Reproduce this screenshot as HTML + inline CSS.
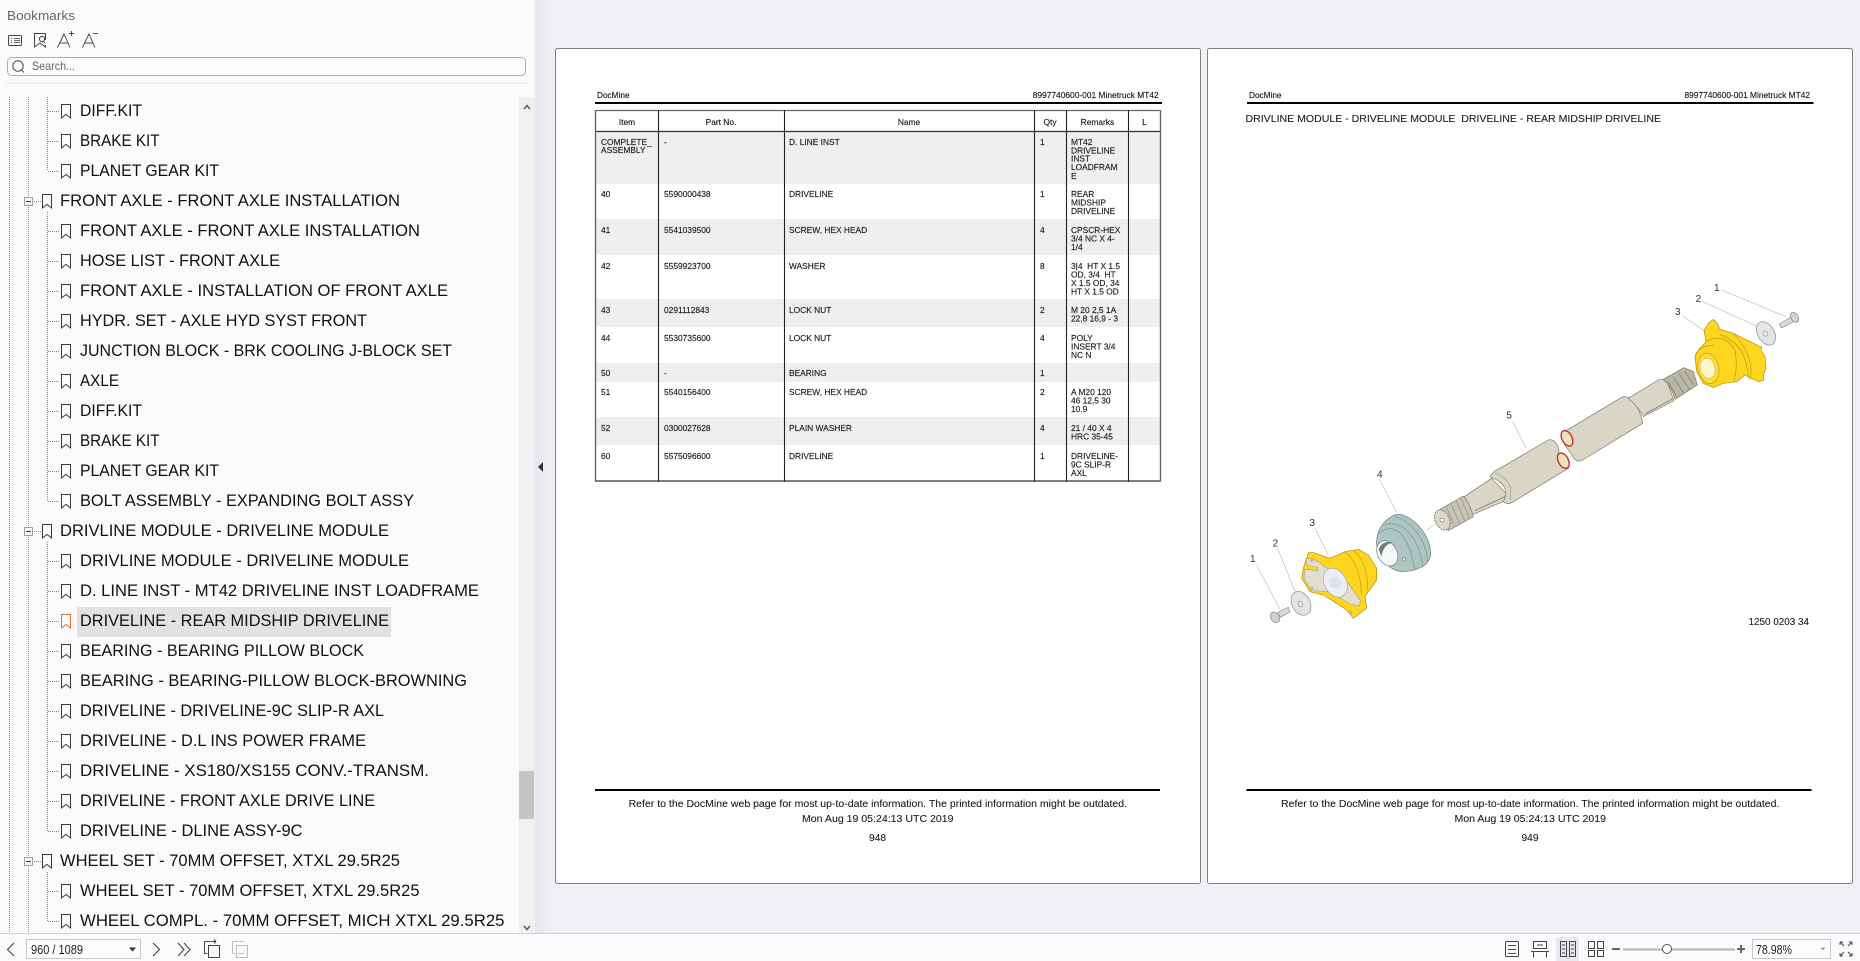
<!DOCTYPE html>
<html><head><meta charset="utf-8"><title>Bookmarks</title>
<style>
html,body{margin:0;padding:0;width:1860px;height:961px;overflow:hidden;background:#eff1f5}
svg{display:block}
text{font-family:"Liberation Sans",Arial,sans-serif}
.t text{font-size:17px;fill:#111}
.p text{font-size:8.4px;fill:#1a1a1a;stroke:#1a1a1a;stroke-width:.14}
.f{font-size:9.9px;fill:#1a1a1a;stroke:#1a1a1a;stroke-width:.08}
.n text{font-size:30px;fill:#333}
.ic{fill:none;stroke:#444;stroke-width:1}
</style></head><body>
<svg width="1860" height="961" viewBox="0 0 1860 961" xmlns="http://www.w3.org/2000/svg">
<defs>
<path id="b" d="M.5.5h9v13.5l-4.5-3.6-4.5 3.6z" fill="none" stroke="#3a3a3a" stroke-width="1"/>
<linearGradient id="bg" x1="0" x2="1"><stop offset="0" stop-color="#e6e8f2"/><stop offset="1" stop-color="#eef0f4"/></linearGradient>
</defs>
<!-- backgrounds -->
<rect width="1860" height="961" fill="#eff1f5"/>
<rect x="535" y="0" width="20" height="933" fill="url(#bg)"/>
<rect x="0" y="0" width="534" height="933" fill="#fbfbfe"/>
<rect x="519" y="97" width="15" height="836" fill="#f0f0f2"/>
<rect x="519" y="771" width="15" height="48" fill="#c4c4c4"/>
<path d="M524 109l3-3.5 3 3.5" fill="none" stroke="#555" stroke-width="1.4"/>
<path d="M524 926l3 3.5 3-3.5" fill="none" stroke="#555" stroke-width="1.4"/>
<path d="M543 462l-5 5 5 5z" fill="#333"/>

<!-- sidebar header -->
<text x="7" y="20" font-size="13" fill="#666" textLength="68" lengthAdjust="spacingAndGlyphs">Bookmarks</text>
<g class="ic">
<rect x="8.5" y="35.5" width="13" height="10" rx="1"/>
<path d="M11 38.5h1M14 38.5h6M11 40.5h1M14 40.5h6M11 42.5h1M14 42.5h6" stroke="#666"/>
<path d="M45.5 40V33.5H34.5V47l5.5-4 5.5 4V45"/>
<circle cx="42" cy="39" r="2.6"/><path d="M43.5 41.5l1.5 2"/>
<path d="M57.5 47.5L64 34l6 13.5M60 43h8" stroke-width=".9"/><path d="M69 33.5h5M71.5 31v5" stroke-width=".9"/>
<path d="M82.5 47.5L89 34l6 13.5M85 43h8" stroke-width=".9"/><path d="M93 33.5h5" stroke-width=".9"/>
</g>
<rect x="7.5" y="57.5" width="518" height="18" rx="4" fill="#fcfcfe" stroke="#aeaeb6"/>
<circle cx="18" cy="66" r="5.2" fill="none" stroke="#444"/><path d="M21.5 70l2.5 2.5" stroke="#444"/>
<text x="32" y="70" font-size="12" fill="#666" textLength="43" lengthAdjust="spacingAndGlyphs">Search...</text>
<path d="M6 83h522" stroke="#e4e4e6"/>

<!-- tree lines -->
<g fill="none" stroke="#8a8a8a" stroke-dasharray="1 1">
<path d="M9.5 97V933M28.5 97V933"/>
<path d="M47.5 97V171M47.5 212V501M47.5 542V831M47.5 872V921"/>
<path d="M48 111.5h12M48 141.5h12M48 171.5h12"/>
<path d="M48 231.5h12M48 261.5h12M48 291.5h12M48 321.5h12M48 351.5h12M48 381.5h12M48 411.5h12M48 441.5h12M48 471.5h12M48 501.5h12"/>
<path d="M48 561.5h12M48 591.5h12M48 621.5h12M48 651.5h12M48 681.5h12M48 711.5h12M48 741.5h12M48 771.5h12M48 801.5h12M48 831.5h12"/>
<path d="M48 891.5h12M48 921.5h12"/>
<path d="M32 201.5h9M32 531.5h9M32 861.5h9"/>
</g>
<g fill="#f4f4f6" stroke="#a0a0a0">
<rect x="24.5" y="197.5" width="8" height="8"/><rect x="24.5" y="527.5" width="8" height="8"/><rect x="24.5" y="857.5" width="8" height="8"/>
</g>
<path d="M26 201.5h5M26 531.5h5M26 861.5h5" stroke="#444"/>

<rect x="77" y="607" width="314" height="30" fill="#e2e2e2"/>

<!-- bookmark icons -->
<g>
<use href="#b" x="61" y="104"/><use href="#b" x="61" y="134"/><use href="#b" x="61" y="164"/>
<use href="#b" x="42" y="194"/>
<use href="#b" x="61" y="224"/><use href="#b" x="61" y="254"/><use href="#b" x="61" y="284"/><use href="#b" x="61" y="314"/><use href="#b" x="61" y="344"/><use href="#b" x="61" y="374"/><use href="#b" x="61" y="404"/><use href="#b" x="61" y="434"/><use href="#b" x="61" y="464"/><use href="#b" x="61" y="494"/>
<use href="#b" x="42" y="524"/>
<use href="#b" x="61" y="554"/><use href="#b" x="61" y="584"/>
<path d="M61.5 614.5h9V628l-4.5-3.6-4.5 3.6z" fill="none" stroke="#d9752b"/>
<use href="#b" x="61" y="644"/><use href="#b" x="61" y="674"/><use href="#b" x="61" y="704"/><use href="#b" x="61" y="734"/><use href="#b" x="61" y="764"/><use href="#b" x="61" y="794"/><use href="#b" x="61" y="824"/>
<use href="#b" x="42" y="854"/>
<use href="#b" x="61" y="884"/><use href="#b" x="61" y="914"/>
</g>

<!-- tree text -->
<g class="t" transform="translate(0 -.8)">
<text x="80" y="117" textLength="62" lengthAdjust="spacingAndGlyphs">DIFF.KIT</text>
<text x="80" y="147" textLength="79.5" lengthAdjust="spacingAndGlyphs">BRAKE KIT</text>
<text x="80" y="177" textLength="139" lengthAdjust="spacingAndGlyphs">PLANET GEAR KIT</text>
<text x="60" y="207" textLength="340" lengthAdjust="spacingAndGlyphs">FRONT AXLE - FRONT AXLE INSTALLATION</text>
<text x="80" y="237" textLength="340" lengthAdjust="spacingAndGlyphs">FRONT AXLE - FRONT AXLE INSTALLATION</text>
<text x="80" y="267" textLength="200" lengthAdjust="spacingAndGlyphs">HOSE LIST - FRONT AXLE</text>
<text x="80" y="297" textLength="368" lengthAdjust="spacingAndGlyphs">FRONT AXLE - INSTALLATION OF FRONT AXLE</text>
<text x="80" y="327" textLength="287" lengthAdjust="spacingAndGlyphs">HYDR. SET - AXLE HYD SYST FRONT</text>
<text x="80" y="357" textLength="372" lengthAdjust="spacingAndGlyphs">JUNCTION BLOCK - BRK COOLING J-BLOCK SET</text>
<text x="80" y="387" textLength="39" lengthAdjust="spacingAndGlyphs">AXLE</text>
<text x="80" y="417" textLength="62" lengthAdjust="spacingAndGlyphs">DIFF.KIT</text>
<text x="80" y="447" textLength="79.5" lengthAdjust="spacingAndGlyphs">BRAKE KIT</text>
<text x="80" y="477" textLength="139" lengthAdjust="spacingAndGlyphs">PLANET GEAR KIT</text>
<text x="80" y="507" textLength="334" lengthAdjust="spacingAndGlyphs">BOLT ASSEMBLY - EXPANDING BOLT ASSY</text>
<text x="60" y="537" textLength="329" lengthAdjust="spacingAndGlyphs">DRIVLINE MODULE - DRIVELINE MODULE</text>
<text x="80" y="567" textLength="329" lengthAdjust="spacingAndGlyphs">DRIVLINE MODULE - DRIVELINE MODULE</text>
<text x="80" y="597" textLength="399" lengthAdjust="spacingAndGlyphs">D. LINE INST - MT42 DRIVELINE INST LOADFRAME</text>
<text x="80" y="627" textLength="309" lengthAdjust="spacingAndGlyphs">DRIVELINE - REAR MIDSHIP DRIVELINE</text>
<text x="80" y="657" textLength="284" lengthAdjust="spacingAndGlyphs">BEARING - BEARING PILLOW BLOCK</text>
<text x="80" y="687" textLength="387" lengthAdjust="spacingAndGlyphs">BEARING - BEARING-PILLOW BLOCK-BROWNING</text>
<text x="80" y="717" textLength="304" lengthAdjust="spacingAndGlyphs">DRIVELINE - DRIVELINE-9C SLIP-R AXL</text>
<text x="80" y="747" textLength="286" lengthAdjust="spacingAndGlyphs">DRIVELINE - D.L INS POWER FRAME</text>
<text x="80" y="777" textLength="349" lengthAdjust="spacingAndGlyphs">DRIVELINE - XS180/XS155 CONV.-TRANSM.</text>
<text x="80" y="807" textLength="295" lengthAdjust="spacingAndGlyphs">DRIVELINE - FRONT AXLE DRIVE LINE</text>
<text x="80" y="837" textLength="222.5" lengthAdjust="spacingAndGlyphs">DRIVELINE - DLINE ASSY-9C</text>
<text x="60" y="867" textLength="340" lengthAdjust="spacingAndGlyphs">WHEEL SET - 70MM OFFSET, XTXL 29.5R25</text>
<text x="80" y="897" textLength="339.5" lengthAdjust="spacingAndGlyphs">WHEEL SET - 70MM OFFSET, XTXL 29.5R25</text>
<text x="80" y="927" textLength="424.5" lengthAdjust="spacingAndGlyphs">WHEEL COMPL. - 70MM OFFSET, MICH XTXL 29.5R25</text>
</g>

<!-- page 1 -->
<rect x="555.5" y="48.5" width="645" height="835" rx="2" fill="#fff" stroke="#808080"/>
<g class="p">
<text x="597" y="98" textLength="32.5" lengthAdjust="spacingAndGlyphs">DocMine</text>
<text x="1032.7" y="98" textLength="126" lengthAdjust="spacingAndGlyphs">8997740600-001 Minetruck MT42</text>
</g>
<rect x="595" y="102" width="567" height="2" fill="#000"/>
<g fill="#efefef">
<rect x="595" y="132" width="566" height="52"/><rect x="595" y="219" width="566" height="36"/><rect x="595" y="299" width="566" height="28"/><rect x="595" y="363" width="566" height="19"/><rect x="595" y="417" width="566" height="28"/>
</g>
<g fill="none">
<path d="M595.5 110.5h565" stroke="#666" stroke-width="1.2"/>
<path d="M595 131.5h566M595 481h566" stroke="#333" stroke-width="1.2"/>
<path d="M595.5 110v371M1160.5 110v371" stroke="#666" stroke-width="1.4"/>
<path d="M658.5 110v372M784.5 110v372M1034.5 110v372M1066.5 110v372M1128.5 110v372" stroke="#222" stroke-width="1.1"/>
</g>
<g class="p">
<g text-anchor="middle">
<text x="627" y="125">Item</text><text x="721" y="125">Part No.</text><text x="909" y="125">Name</text><text x="1050" y="125">Qty</text><text x="1097.4" y="125">Remarks</text><text x="1144.5" y="125">L</text>
</g>
<text x="601" y="145">COMPLETE_</text><text x="601" y="153">ASSEMBLY</text>
<text x="664" y="145">-</text><text x="789" y="145">D. LINE INST</text><text x="1040" y="145">1</text>
<text x="1071" y="145">MT42</text><text x="1071" y="153.3">DRIVELINE</text><text x="1071" y="161.7">INST</text><text x="1071" y="170">LOADFRAM</text><text x="1071" y="179">E</text>

<text x="601" y="197">40</text><text x="664" y="197">5590000438</text><text x="789" y="197">DRIVELINE</text><text x="1040" y="197">1</text>
<text x="1071" y="197">REAR</text><text x="1071" y="205.5">MIDSHIP</text><text x="1071" y="214">DRIVELINE</text>

<text x="601" y="233">41</text><text x="664" y="233">5541039500</text><text x="789" y="233">SCREW, HEX HEAD</text><text x="1040" y="233">4</text>
<text x="1071" y="233">CPSCR-HEX</text><text x="1071" y="241.5">3/4 NC X 4-</text><text x="1071" y="250">1/4</text>

<text x="601" y="269">42</text><text x="664" y="269">5559923700</text><text x="789" y="269">WASHER</text><text x="1040" y="269">8</text>
<text x="1071" y="269" xml:space="preserve" style="white-space:pre">3|4  HT X 1.5</text><text x="1071" y="277.5" xml:space="preserve" style="white-space:pre">OD, 3/4  HT</text><text x="1071" y="286">X 1.5 OD, 34</text><text x="1071" y="294.5">HT X 1.5 OD</text>

<text x="601" y="313">43</text><text x="664" y="313">0291112843</text><text x="789" y="313">LOCK NUT</text><text x="1040" y="313">2</text>
<text x="1071" y="313">M 20 2,5 1A</text><text x="1071" y="321.5">22,8 16,9 - 3</text>

<text x="601" y="341">44</text><text x="664" y="341">5530735600</text><text x="789" y="341">LOCK NUT</text><text x="1040" y="341">4</text>
<text x="1071" y="341">POLY</text><text x="1071" y="349.5">INSERT 3/4</text><text x="1071" y="358">NC N</text>

<text x="601" y="376">50</text><text x="664" y="376">-</text><text x="789" y="376">BEARING</text><text x="1040" y="376">1</text>

<text x="601" y="395">51</text><text x="664" y="395">5540156400</text><text x="789" y="395">SCREW, HEX HEAD</text><text x="1040" y="395">2</text>
<text x="1071" y="395">A M20 120</text><text x="1071" y="403.5">46 12,5 30</text><text x="1071" y="412">10.9</text>

<text x="601" y="431">52</text><text x="664" y="431">0300027628</text><text x="789" y="431">PLAIN WASHER</text><text x="1040" y="431">4</text>
<text x="1071" y="431">21 / 40 X 4</text><text x="1071" y="439.5">HRC 35-45</text>

<text x="601" y="459">60</text><text x="664" y="459">5575096600</text><text x="789" y="459">DRIVELINE</text><text x="1040" y="459">1</text>
<text x="1071" y="459">DRIVELINE-</text><text x="1071" y="467.5">9C SLIP-R</text><text x="1071" y="476">AXL</text>
</g>
<rect x="595" y="789" width="565" height="2" fill="#000"/>
<text class="f" x="628.6" y="807" textLength="498.4" lengthAdjust="spacingAndGlyphs">Refer to the DocMine web page for most up-to-date information. The printed information might be outdated.</text>
<text class="f" x="802" y="822" textLength="151.5" lengthAdjust="spacingAndGlyphs">Mon Aug 19 05:24:13 UTC 2019</text>
<text class="f" x="869" y="841" textLength="17" lengthAdjust="spacingAndGlyphs">948</text>

<!-- page 2 -->
<rect x="1207.5" y="48.5" width="645" height="835" rx="2" fill="#fff" stroke="#808080"/>
<g class="p">
<text x="1249" y="98" textLength="32.5" lengthAdjust="spacingAndGlyphs">DocMine</text>
<text x="1684.5" y="98" textLength="125.5" lengthAdjust="spacingAndGlyphs">8997740600-001 Minetruck MT42</text>
</g>
<rect x="1247" y="102" width="566.5" height="2" fill="#000"/>
<text class="f" x="1245.5" y="122" textLength="415.5" lengthAdjust="spacingAndGlyphs" xml:space="preserve" style="white-space:pre">DRIVLINE MODULE - DRIVELINE MODULE  DRIVELINE - REAR MIDSHIP DRIVELINE</text>
<rect x="1246.5" y="789" width="565" height="2" fill="#000"/>
<text class="f" x="1281" y="807" textLength="498.4" lengthAdjust="spacingAndGlyphs">Refer to the DocMine web page for most up-to-date information. The printed information might be outdated.</text>
<text class="f" x="1454.5" y="822" textLength="151.5" lengthAdjust="spacingAndGlyphs">Mon Aug 19 05:24:13 UTC 2019</text>
<text class="f" x="1521.5" y="841" textLength="17" lengthAdjust="spacingAndGlyphs">949</text>
<text class="f" x="1748.5" y="625" textLength="60.5" lengthAdjust="spacingAndGlyphs">1250 0203 34</text>

<!-- illustration: leaders and labels, upper (origin 1480,270) -->
<g transform="translate(1480 270) scale(.33333)">
<g fill="none" stroke="#c8c8c8" stroke-width="2.4">
<path d="M725 60L918 140M668 95L830 168M608 137L675 185M98 455L138 535"/>
</g>
<g class="n"><text x="702" y="63">1</text><text x="647" y="96">2</text><text x="585" y="135">3</text><text x="79" y="446">5</text></g>
<!-- upper shaft segment -->
<path d="M245 490L425 382Q445 375 462 395Q480 420 488 460L308 570Q295 578 282 565L248 515Z" fill="#d9d6c5" stroke="#77776c" stroke-width="2"/>
<path d="M445 385L535 330Q552 322 565 345L582 392L490 440Q475 410 445 385Z" fill="#d9d6c5" stroke="#77776c" stroke-width="2"/>
<path d="M495 432L580 385" stroke="#88887c" stroke-width="3"/>
<ellipse cx="261" cy="505" rx="15" ry="25" transform="rotate(-28 261 505)" fill="#ece4b8" stroke="#c8282e" stroke-width="4"/>
<!-- upper splines -->
<path d="M550 328L612 293L640 305L652 345L585 388Q575 350 550 328Z" fill="#b8b6a6" stroke="#77776c" stroke-width="2"/>
<path d="M565 335L590 380M580 322L610 368M598 312L628 358M614 304L642 345" stroke="#87867a" stroke-width="2.5" fill="none"/>
</g>

<!-- lower shaft, origin 1420,420 -->
<g transform="translate(1420 420) scale(.33333)">
<path d="M50 310L20 330" stroke="#c8c8c8" stroke-width="2"/>
<path d="M130 232L215 175L272 235L150 287Z" fill="#d9d6c5" stroke="#77776c" stroke-width="2"/>
<path d="M165 272L255 230" stroke="#88887c" stroke-width="3"/>
<path d="M210 170Q220 152 240 145L385 60Q400 55 412 75Q420 90 415 105L445 145L275 248Q262 255 250 245Q275 195 210 170Z" fill="#d9d6c5" stroke="#77776c" stroke-width="2"/>
<path d="M225 160Q262 170 272 205L272 240" fill="none" stroke="#99998c" stroke-width="2"/>
<path d="M60 268L130 228Q150 250 160 290L85 332Z" fill="#c6c4b3" stroke="#77776c" stroke-width="2"/>
<path d="M78 258L105 322M92 250L120 312M108 241L134 302M122 234L148 294" stroke="#98978a" stroke-width="2.5" fill="none"/>
<ellipse cx="67" cy="300" rx="21" ry="32" transform="rotate(-25 67 300)" fill="#dcd9c9" stroke="#77776c" stroke-width="3" stroke-dasharray="5 3"/>
<circle cx="66" cy="300" r="6" fill="#fff" stroke="#77776c" stroke-width="2"/>
<ellipse cx="430" cy="122" rx="15" ry="25" transform="rotate(-28 430 122)" fill="#ece4b8" stroke="#c8282e" stroke-width="4"/>
</g>

<!-- upper yellow part, origin 1680,300 -->
<g transform="translate(1680 300) scale(.33333)">
<path d="M100 58L112 70L120 88L160 100L220 130L245 142L243 150L255 170L258 205L250 225L252 240L235 245L195 225L170 245L130 250L100 262L70 250L50 215L45 170L55 150L78 125L72 90L85 70Z" fill="#ffd51e" stroke="#a88f10" stroke-width="2"/>
<path d="M78 125Q130 95 165 150Q175 200 160 248M120 105Q200 130 205 235M160 100Q225 170 210 240M45 170Q50 140 100 135" fill="none" stroke="#b89c10" stroke-width="2"/>
<ellipse cx="85" cy="205" rx="31" ry="46" transform="rotate(-12 85 205)" fill="#ffdb3a" stroke="#b89c10" stroke-width="2"/>
<ellipse cx="83" cy="205" rx="22" ry="31" transform="rotate(-12 83 205)" fill="#fff6cc" stroke="#b09a30" stroke-width="2" stroke-dasharray="4 3"/>
<ellipse cx="258" cy="100" rx="25" ry="38" transform="rotate(-30 258 100)" fill="#e2e5e7" stroke="#8a8a8a" stroke-width="2"/>
<ellipse cx="256" cy="101" rx="6" ry="8" transform="rotate(-30 256 101)" fill="#f4f4f4" stroke="#8a8a8a" stroke-width="2"/>
<path d="M298 72L335 50L342 64L304 84Z" fill="#d8dcdc" stroke="#8a8a8a" stroke-width="2"/>
<ellipse cx="344" cy="52" rx="11" ry="16" transform="rotate(-30 344 52)" fill="#cdd1d1" stroke="#8a8a8a" stroke-width="2"/>
</g>

<!-- illustration: lower part, origin 1230,480 -->
<g transform="translate(1230 480) scale(.33333)">
<g fill="none" stroke="#c8c8c8" stroke-width="2.4">
<path d="M80 255L150 388M143 205L195 335M255 145L295 225M450 0L500 97M440 235L460 225"/>
</g>
<g class="n"><text x="60" y="246">1</text><text x="128" y="200">2</text><text x="238" y="138">3</text><text x="441" y="-8">4</text></g>
<path d="M440 180C445 130 490 98 510 103C560 115 600 170 602 220C602 255 560 275 515 275C470 270 435 220 440 180Z" fill="#aec6c1" stroke="#6a7a78" stroke-width="2"/>
<path d="M448 160C490 125 535 155 555 272M465 135C510 115 570 170 578 262M495 110C545 125 590 180 592 245" fill="none" stroke="#7a908c" stroke-width="2"/>
<ellipse cx="472" cy="220" rx="29" ry="40" transform="rotate(-28 472 220)" fill="#f6f8f8" stroke="#6a7a78" stroke-width="2"/>
<path d="M446 207Q458 180 490 188Q462 190 454 230Z" fill="#6f7f7c"/>
<circle cx="522" cy="238" r="5" fill="#e8eceb" stroke="#6a7a78" stroke-width="2"/>
<!-- yellow flange -->
<path d="M220 265L235 218L250 218L300 235L345 215L385 208L415 225L440 265L440 300L415 335L405 350L410 385L370 415L350 390L320 370L280 345L240 335L215 295Z" fill="#ffd51e" stroke="#a88f10" stroke-width="2"/>
<path d="M345 215Q390 250 395 345M370 210Q415 250 412 330" fill="none" stroke="#b89c10" stroke-width="2"/>
<path d="M228 236L250 236L355 310L392 362L388 378L360 372L300 335L245 332L222 295L224 268L262 272L264 262L232 256Z" fill="#e2dfd2" stroke="#a09c80" stroke-width="1.6"/>
<ellipse cx="316" cy="308" rx="33" ry="46" transform="rotate(-28 316 308)" fill="#eceef4" stroke="#a6a6ac" stroke-width="2"/>
<circle cx="316" cy="308" r="18" fill="#dfe2ea"/>
<circle cx="246" cy="241" r="5" fill="#b8b4c4"/><circle cx="245" cy="325" r="5" fill="#b8b4c4"/><circle cx="362" cy="397" r="5" fill="#b8b4c4"/>
<ellipse cx="213" cy="370" rx="27" ry="38" transform="rotate(-28 213 370)" fill="#e2e5e7" stroke="#8a8a8a" stroke-width="2"/>
<ellipse cx="211" cy="372" rx="6" ry="9" transform="rotate(-28 211 372)" fill="#f2f2f2" stroke="#8a8a8a" stroke-width="2"/>
<path d="M145 396L175 382L180 396L150 412Z" fill="#d8dcdc" stroke="#8a8a8a" stroke-width="2"/>
<ellipse cx="135" cy="412" rx="13" ry="17" transform="rotate(-28 135 412)" fill="#cdd1d1" stroke="#8a8a8a" stroke-width="2"/>
</g>

<!-- bottom bar -->
<rect x="0" y="933" width="1860" height="28" fill="#fbfbfd"/>
<path d="M0 933.5h1860" stroke="#cfcfd4"/>
<g fill="none" stroke="#444" stroke-width="1">
<path d="M14 943l-6.5 6.5 6.5 6.5" stroke-width="1.1"/>
<path d="M153 943l6.5 6.5-6.5 6.5" stroke-width="1.1"/>
<path d="M178 943l6 6.5-6 6.5M184 943l6 6.5-6 6.5" stroke-width="1.1"/>
<path d="M204.5 941.5h6M204.5 941.5v12M204.5 953.5h3M208.5 945.5h11v12h-11zM216 941.5h-5M216 941.5l-2-2M216 941.5l-2 2"/>
</g>
<g fill="none" stroke="#bdbdc2" stroke-width="1">
<path d="M232.5 941.5h6M232.5 941.5v12M232.5 953.5h3M236.5 945.5h11v12h-11zM244 941.5h-5M238 953.5h6"/>
</g>
<rect x="26.5" y="939.5" width="114" height="19" fill="#fdfdfe" stroke="#c8c8cc"/>
<text x="31" y="954" font-size="13" fill="#222" textLength="52" lengthAdjust="spacingAndGlyphs">960 / 1089</text>
<path d="M129 947.5h7l-3.5 4z" fill="#333"/>

<rect x="1556" y="937" width="23" height="24" fill="#e8e9ee"/>
<g fill="none" stroke="#444" stroke-width="1">
<rect x="1505.5" y="941.5" width="13" height="15" rx="1"/>
<path d="M1508 945.5h8M1508 949.5h8M1508 953.5h8"/>
<path d="M1533.5 941.5h13v7h-13zM1533.5 951.5v6M1546.5 951.5v6M1531 951.5h18M1537 945h6"/>
<rect x="1560.5" y="941.5" width="6" height="15"/><rect x="1569.5" y="941.5" width="6" height="15"/>
<path d="M1562 945h3M1562 949h3M1562 953h3M1571 945h3M1571 949h3M1571 953h3"/>
<rect x="1588.5" y="941.5" width="6" height="7"/><rect x="1597.5" y="941.5" width="6" height="7"/>
<rect x="1588.5" y="950.5" width="6" height="6"/><rect x="1597.5" y="950.5" width="6" height="6"/>
</g>
<path d="M1612 949h8" stroke="#666" stroke-width="2"/>
<path d="M1623 949.5h112" stroke="#b4b4b4" stroke-width="2"/>
<circle cx="1667" cy="949" r="4.5" fill="#fff" stroke="#555"/>
<path d="M1737 949h8M1741 945v8" stroke="#666" stroke-width="2"/>
<rect x="1752.5" y="939.5" width="78" height="19" fill="#fdfdfe" stroke="#c8c8cc"/>
<text x="1756" y="954" font-size="13" fill="#222" textLength="36" lengthAdjust="spacingAndGlyphs">78.98%</text>
<path d="M1820.5 947.5h5l-2.5 3z" fill="#999"/>
<g fill="none" stroke="#444">
<path d="M1840 942l4 4M1840 942v3M1840 942h3M1852 942l-4 4M1852 942v3M1852 942h-3M1840 956l4-4M1840 956v-3M1840 956h3M1852 956l-4-4M1852 956v-3M1852 956h-3"/>
</g>
</svg>
</body></html>
